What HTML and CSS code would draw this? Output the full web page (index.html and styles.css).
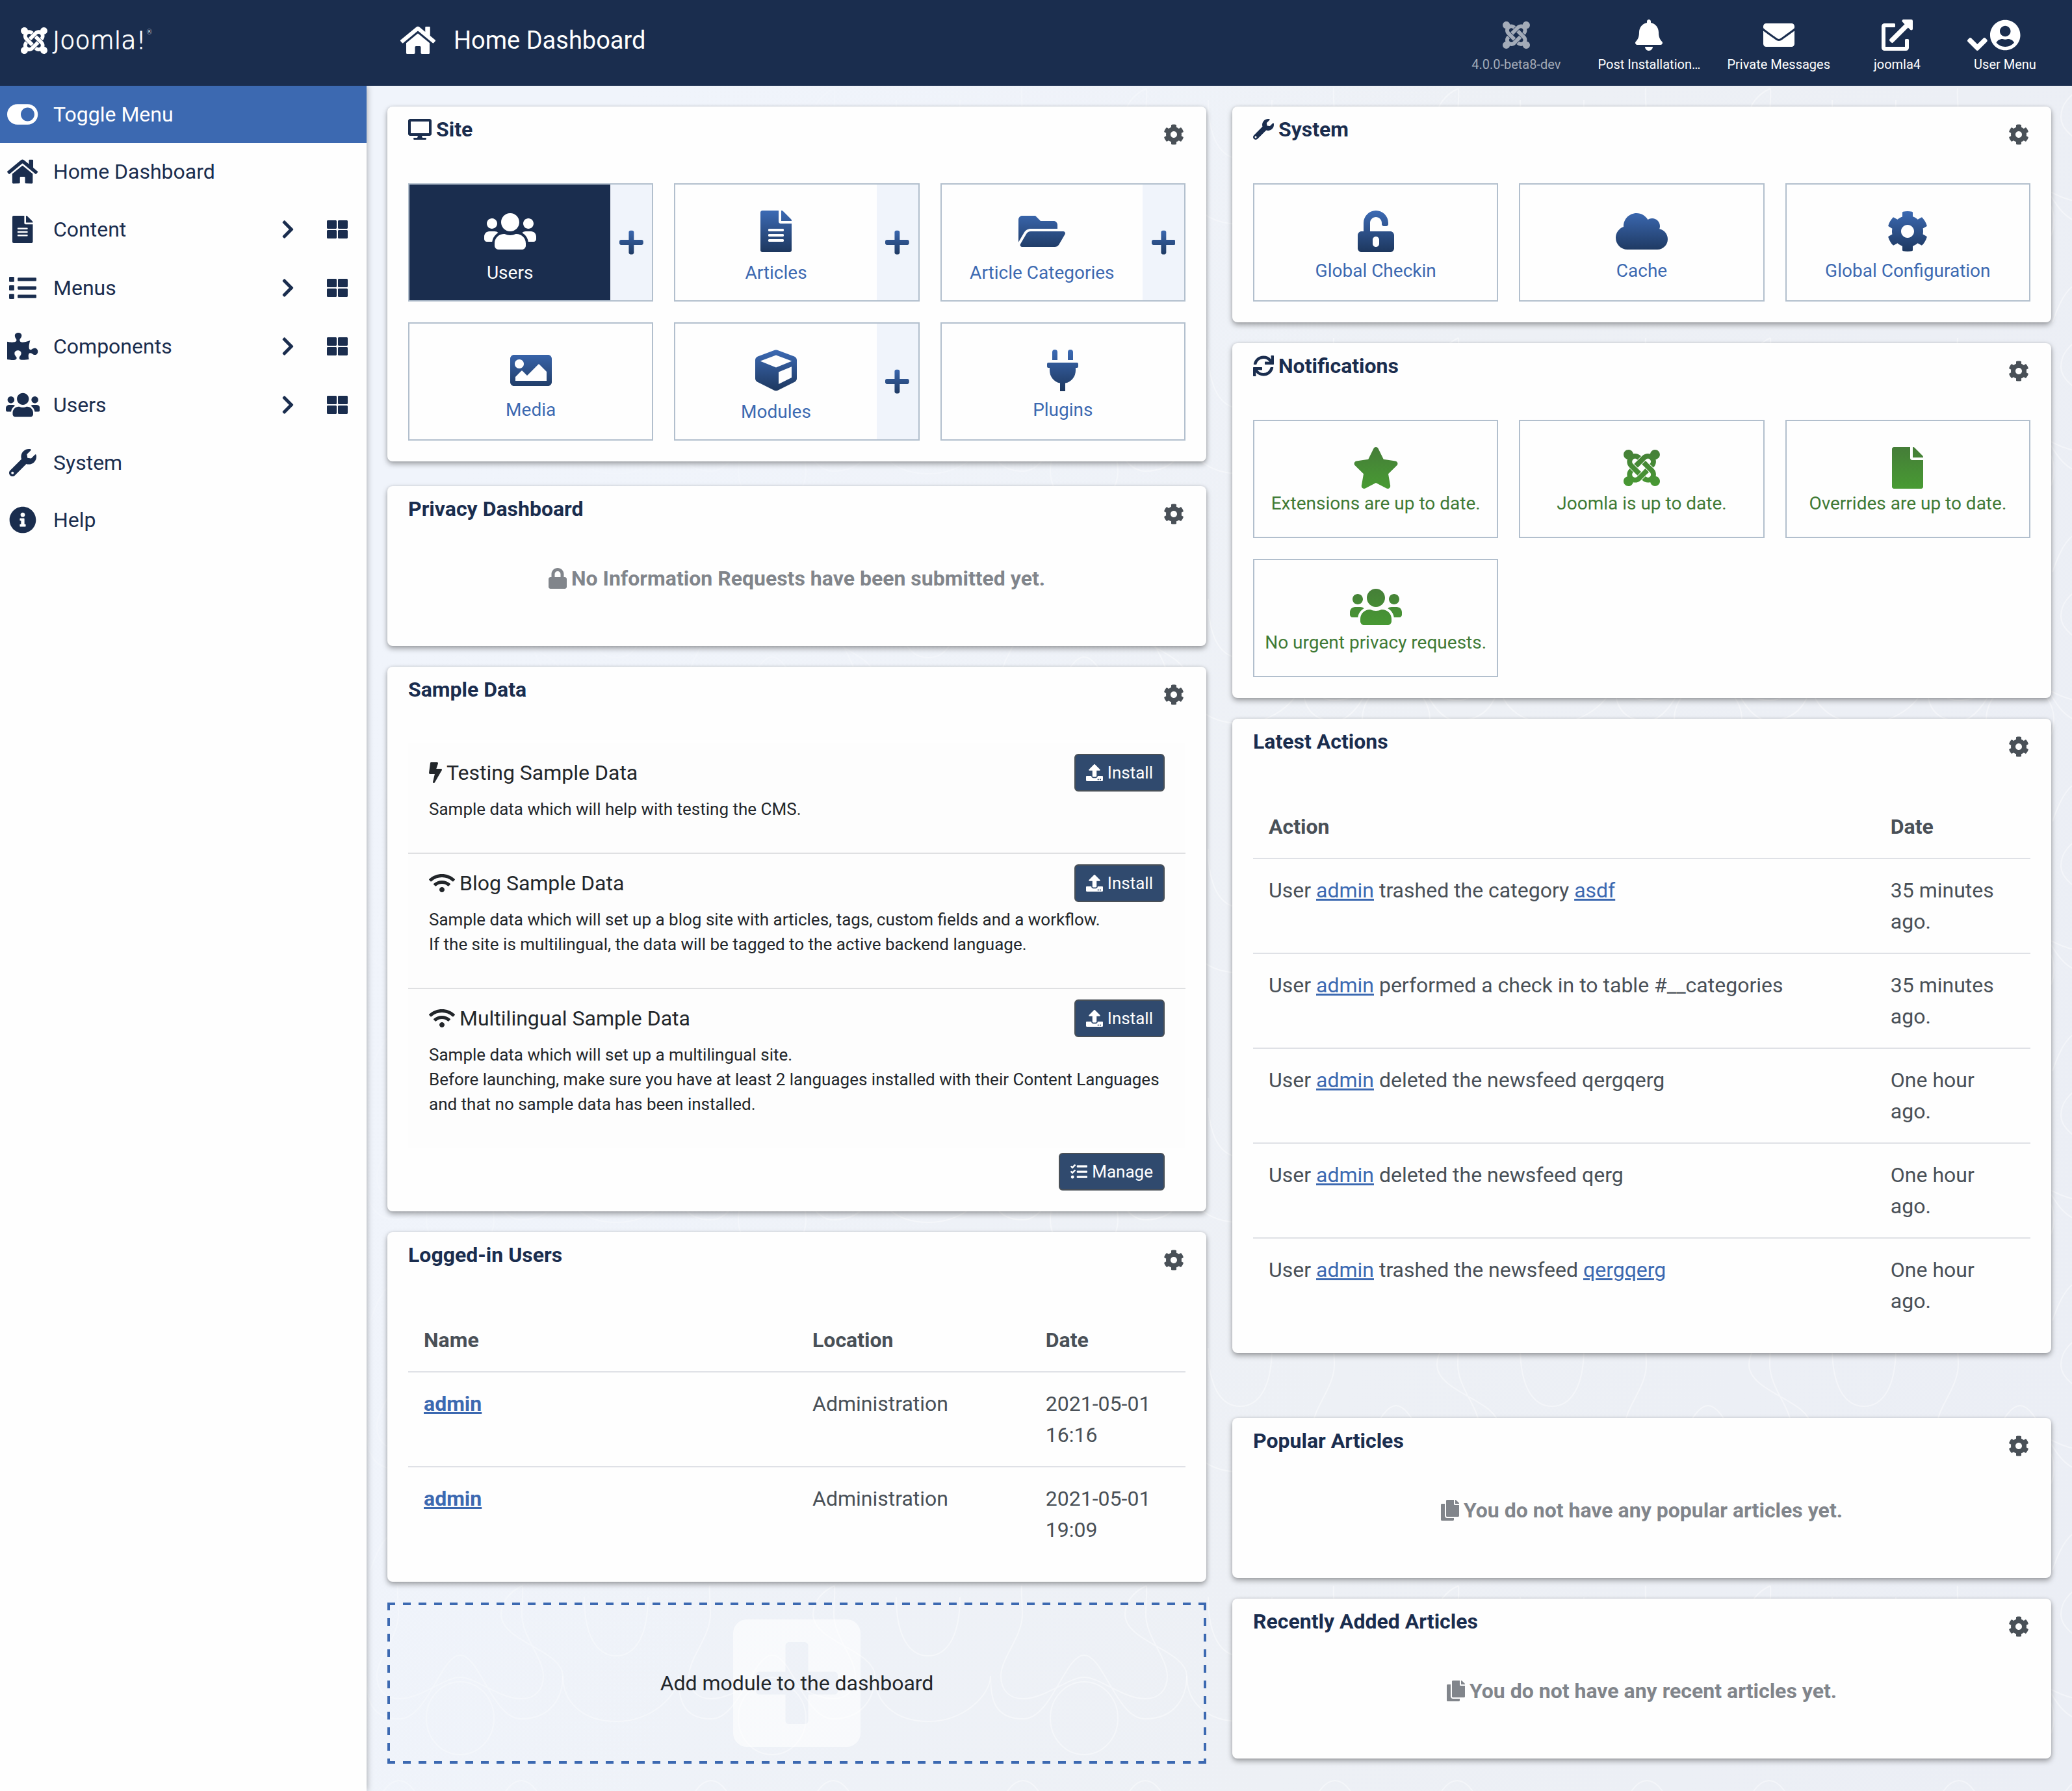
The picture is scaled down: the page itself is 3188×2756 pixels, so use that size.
FILE: index.html
```html
<!DOCTYPE html>
<html lang="en">
<head>
    <meta charset="UTF-8">
    <meta name="viewport" content="width=device-width, initial-scale=1.0">
    <title>Home Dashboard - joomla4 - Administration</title>
    <link rel="stylesheet" href="styles.css">
</head>
<body>
    <!-- Icon shapes -->
    <svg class="sprite" aria-hidden="true">
        <defs>
            <linearGradient id="blue" gradientUnits="userSpaceOnUse" x1="0" y1="0" x2="0" y2="512">
                <stop offset="0" stop-color="#3c6ab4"/>
                <stop offset="1" stop-color="#1d375e"/>
            </linearGradient>
            <linearGradient id="green" gradientUnits="userSpaceOnUse" x1="0" y1="0" x2="0" y2="512">
                <stop offset="0" stop-color="#457d38"/>
                <stop offset="1" stop-color="#489b33"/>
            </linearGradient>
            <path id="joomla" d="M.6 92.1C.6 58.8 27.4 32 60.4 32c30 0 54.5 21.9 59.2 50.2 32.6-7.6 67.1.6 96.5 30l-44.3 44.3c-20.5-20.5-42.6-16.3-55.4-3.5-14.3 14.3-14.3 37.9 0 52.2l99.5 99.5-44 44.3c-87.7-87.2-49.7-49.7-99.8-99.7-26.8-26.5-35-64.8-24.8-98.9C20.4 144.6.6 120.7.6 92.1zm129.5 116.4l44.3 44.3c10-10 89.7-89.7 99.7-99.8 14.3-14.3 37.6-14.3 51.9 0 12.8 12.8 17 35-3.5 55.4l44 44.3c31.2-31.2 38.5-67.6 28.9-101.2 29.2-4.1 51.9-29.2 51.9-59.5 0-33.2-26.8-60.1-59.8-60.1-30.3 0-55.4 22.5-59.5 51.6-33.8-9.9-71.7-1.5-98.3 25.1-18.3 19.1-71.1 71.5-99.6 99.9zm266.3 152.2c8.2-32.7-.9-68.5-26.3-93.9-11.8-12.2 5 4.7-99.5-99.7l-44.3 44.3 99.7 99.7c14.3 14.3 14.3 37.6 0 51.9-12.8 12.8-35 17-55.4-3.5l-44 44.3c27.6 30.2 68 38.8 102.7 28 5.5 27.4 29.7 48.1 58.9 48.1 33 0 59.8-26.8 59.8-60.1 0-30.2-22.5-55-51.6-59.1zm-84.3-53.1l-44-44.3c-87 86.4-50.4 50.4-99.7 99.8-14.3 14.3-37.6 14.3-51.9 0-13.1-13.4-16.9-35.3 3.2-55.4l-44-44.3c-30.2 30.2-38 65.2-29.5 98.3-26.7 6-46.2 29.9-46.2 58.2C0 453.2 26.8 480 59.8 480c28.6 0 52.5-19.8 58.6-46.7 32.7 8.2 68.5-.6 94.2-26 32.1-32 12.2-12.4 99.5-99.7z"/>
            <path id="home" d="M280.37 148.26L96 300.11V464a16 16 0 0 0 16 16l112.06-.29a16 16 0 0 0 15.92-16V368a16 16 0 0 1 16-16h64a16 16 0 0 1 16 16v95.64a16 16 0 0 0 16 16.05L464 480a16 16 0 0 0 16-16V300L295.67 148.26a12.19 12.19 0 0 0-15.3 0zM571.6 251.47L488 182.56V44.05a12 12 0 0 0-12-12h-56a12 12 0 0 0-12 12v72.61L318.47 43a48 48 0 0 0-61 0L4.34 251.47a12 12 0 0 0-1.6 16.9l25.5 31A12 12 0 0 0 45.15 301l235.22-193.74a12.19 12.19 0 0 1 15.3 0L530.9 301a12 12 0 0 0 16.9-1.6l25.5-31a12 12 0 0 0-1.7-16.93z"/>
            <path id="bell" d="M224 512c35.32 0 63.97-28.65 63.97-64H160.03c0 35.35 28.65 64 63.97 64zm215.39-149.71c-19.32-20.76-55.47-51.99-55.47-154.29 0-77.7-54.48-139.9-127.94-155.16V32c0-17.67-14.32-32-31.98-32s-31.98 14.33-31.98 32v20.84C118.56 68.1 64.08 130.3 64.08 208c0 102.3-36.15 133.53-55.47 154.29-6 6.45-8.66 14.16-8.61 21.71.11 16.4 12.98 32 32.1 32h383.8c19.12 0 32-15.6 32.1-32 .05-7.55-2.61-15.27-8.61-21.71z"/>
            <path id="envelope" d="M502.3 190.8c3.9-3.1 9.7-.2 9.7 4.7V400c0 26.5-21.5 48-48 48H48c-26.5 0-48-21.5-48-48V195.6c0-5 5.7-7.8 9.7-4.7 22.4 17.4 52.1 39.5 154.1 113.6 21.1 15.4 56.7 47.8 92.2 47.6 35.7.3 72-32.8 92.3-47.6 102-74.1 131.6-96.3 154-113.7zM256 320c23.2.4 56.6-29.2 73.4-41.4 132.7-96.3 142.8-104.7 173.4-128.7 5.8-4.5 9.2-11.5 9.2-18.9v-19c0-26.5-21.5-48-48-48H48c-26.5 0-48 21.5-48 48v19c0 7.4 3.4 14.3 9.2 18.9 30.6 23.9 40.7 32.4 173.4 128.7 16.8 12.2 50.2 41.8 73.4 41.4z"/>
            <path id="external" d="M432,320H400a16,16,0,0,0-16,16V448H64V128H208a16,16,0,0,0,16-16V80a16,16,0,0,0-16-16H48A48,48,0,0,0,0,112V464a48,48,0,0,0,48,48H400a48,48,0,0,0,48-48V336A16,16,0,0,0,432,320ZM488,0h-128c-21.37,0-32.05,25.91-17,41l35.73,35.73L135,320.37a24,24,0,0,0,0,34L157.67,377a24,24,0,0,0,34,0L435.28,133.32,471,169c15,15,41,4.5,41-17V24A24,24,0,0,0,488,0Z"/>
            <path id="user-circle" d="M248 8C111 8 0 119 0 256s111 248 248 248 248-111 248-248S385 8 248 8zm0 96c48.6 0 88 39.4 88 88s-39.4 88-88 88-88-39.4-88-88 39.4-88 88-88zm0 344c-58.7 0-111.3-26.6-146.5-68.2 18.8-35.4 55.6-59.8 98.5-59.8 2.4 0 4.8.4 7.1 1.1 13 4.2 26.6 6.9 40.9 6.9 14.3 0 28-2.7 40.9-6.9 2.3-.7 4.7-1.1 7.1-1.1 42.9 0 79.7 24.4 98.5 59.8C359.3 421.4 306.7 448 248 448z"/>
            <path id="angle-down" d="M143 352.3L7 216.3c-9.4-9.4-9.4-24.6 0-33.9l22.6-22.6c9.4-9.4 24.6-9.4 33.9 0l96.4 96.4 96.4-96.4c9.4-9.4 24.6-9.4 33.9 0l22.6 22.6c9.4 9.4 9.4 24.6 0 33.9l-136 136c-9.2 9.4-24.4 9.4-33.8 0z"/>
            <path id="toggle" d="M384 64H192C86 64 0 150 0 256s86 192 192 192h192c106 0 192-86 192-192S490 64 384 64zm0 320c-70.8 0-128-57.3-128-128 0-70.8 57.3-128 128-128 70.8 0 128 57.3 128 128 0 70.8-57.3 128-128 128z"/>
            <path id="file" d="M224 136V0H24C10.7 0 0 10.7 0 24v464c0 13.3 10.7 24 24 24h336c13.3 0 24-10.7 24-24V160H248c-13.2 0-24-10.8-24-24zm160-14.1v6.1H256V0h6.1c6.4 0 12.5 2.5 17 7l97.9 98c4.5 4.5 7 10.6 7 16.9z"/>
            <path id="file-alt" d="M224 136V0H24C10.7 0 0 10.7 0 24v464c0 13.3 10.7 24 24 24h336c13.3 0 24-10.7 24-24V160H248c-13.2 0-24-10.8-24-24zm64 236c0 6.6-5.4 12-12 12H108c-6.6 0-12-5.4-12-12v-8c0-6.6 5.4-12 12-12h168c6.6 0 12 5.4 12 12v8zm0-64c0 6.6-5.4 12-12 12H108c-6.6 0-12-5.4-12-12v-8c0-6.6 5.4-12 12-12h168c6.6 0 12 5.4 12 12v8zm0-72v8c0 6.6-5.4 12-12 12H108c-6.6 0-12-5.4-12-12v-8c0-6.6 5.4-12 12-12h168c6.6 0 12 5.4 12 12zm96-114.1v6.1H256V0h6.1c6.4 0 12.5 2.5 17 7l97.9 98c4.5 4.5 7 10.6 7 16.9z"/>
            <path id="list" d="M80 368H16a16 16 0 0 0-16 16v64a16 16 0 0 0 16 16h64a16 16 0 0 0 16-16v-64a16 16 0 0 0-16-16zm0-320H16A16 16 0 0 0 0 64v64a16 16 0 0 0 16 16h64a16 16 0 0 0 16-16V64a16 16 0 0 0-16-16zm0 160H16a16 16 0 0 0-16 16v64a16 16 0 0 0 16 16h64a16 16 0 0 0 16-16v-64a16 16 0 0 0-16-16zm416 176H176a16 16 0 0 0-16 16v32a16 16 0 0 0 16 16h320a16 16 0 0 0 16-16v-32a16 16 0 0 0-16-16zm0-320H176a16 16 0 0 0-16 16v32a16 16 0 0 0 16 16h320a16 16 0 0 0 16-16V80a16 16 0 0 0-16-16zm0 160H176a16 16 0 0 0-16 16v32a16 16 0 0 0 16 16h320a16 16 0 0 0 16-16v-32a16 16 0 0 0-16-16z"/>
            <path id="puzzle" d="M519.442 288.651c-41.519 0-59.5 31.593-82.058 31.593C377.409 320.244 432 144 432 144s-196.288 80-196.288-3.297c0-35.827 36.288-46.25 36.288-85.985C272 19.216 243.885 0 210.539 0c-34.654 0-66.366 18.891-66.366 56.346 0 41.364 31.711 59.277 31.711 81.75C175.885 207.719 0 166.758 0 166.758v333.237s178.635 41.047 178.635-28.662c0-22.473-40-40.107-40-81.471 0-37.456 29.25-56.346 63.577-56.346 33.673 0 61.788 19.216 61.788 54.717 0 39.735-36.288 50.158-36.288 85.985 0 60.803 129.675 25.73 181.23 25.73 0 0-34.725-120.101 25.827-120.101 35.962 0 46.423 36.152 86.308 36.152C556.712 416 576 387.99 576 354.443c0-34.199-18.962-65.792-56.558-65.792z"/>
            <path id="users" d="M96 224c35.3 0 64-28.7 64-64s-28.7-64-64-64-64 28.7-64 64 28.7 64 64 64zm448 0c35.3 0 64-28.7 64-64s-28.7-64-64-64-64 28.7-64 64 28.7 64 64 64zm32 32h-64c-17.6 0-33.5 7.1-45.1 18.6 40.3 22.1 68.9 62 75.1 109.4h66c17.7 0 32-14.3 32-32v-32c0-35.3-28.7-64-64-64zm-256 0c61.9 0 112-50.1 112-112S381.9 32 320 32 208 82.1 208 144s50.1 112 112 112zm76.8 32h-8.3c-20.8 10-43.9 16-68.5 16s-47.6-6-68.5-16h-8.3C179.6 288 128 339.6 128 403.2V432c0 26.5 21.5 48 48 48h288c26.5 0 48-21.5 48-48v-28.8c0-63.6-51.6-115.2-115.2-115.2zm-223.7-13.4C161.5 263.1 145.6 256 128 256H64c-35.3 0-64 28.7-64 64v32c0 17.7 14.3 32 32 32h65.9c6.3-47.4 34.9-87.3 75.2-109.4z"/>
            <path id="wrench" d="M507.73 109.1c-2.24-9.03-13.54-12.09-20.12-5.51l-74.36 74.36-67.88-11.31-11.31-67.88 74.36-74.36c6.62-6.62 3.43-17.9-5.66-20.16-47.38-11.74-99.55.91-136.58 37.93-39.64 39.64-50.55 97.1-34.05 147.2L18.74 402.76c-24.99 24.99-24.99 65.51 0 90.5 24.99 24.99 65.51 24.99 90.5 0l213.21-213.21c50.12 16.71 107.47 5.68 147.37-34.22 37.07-37.07 49.7-89.32 37.91-136.73zM64 472c-13.25 0-24-10.75-24-24 0-13.26 10.75-24 24-24s24 10.74 24 24c0 13.25-10.75 24-24 24z"/>
            <path id="info" d="M256 8C119.043 8 8 119.083 8 256c0 136.997 111.043 248 248 248s248-111.003 248-248C504 119.083 392.957 8 256 8zm0 110c23.196 0 42 18.804 42 42s-18.804 42-42 42-42-18.804-42-42 18.804-42 42-42zm56 254c0 6.627-5.373 12-12 12h-88c-6.627 0-12-5.373-12-12v-24c0-6.627 5.373-12 12-12h12v-64h-12c-6.627 0-12-5.373-12-12v-24c0-6.627 5.373-12 12-12h64c6.627 0 12 5.373 12 12v100h12c6.627 0 12 5.373 12 12v24z"/>
            <path id="chevron" d="M285.476 272.971L91.132 467.314c-9.373 9.373-24.569 9.373-33.941 0l-22.667-22.667c-9.357-9.357-9.375-24.522-.04-33.901L188.505 256 34.484 101.255c-9.335-9.379-9.317-24.544.04-33.901l22.667-22.667c9.373-9.373 24.569-9.373 33.941 0L285.475 239.03c9.373 9.372 9.373 24.568.001 33.941z"/>
            <path id="th-large" d="M296 32h192c13.255 0 24 10.745 24 24v160c0 13.255-10.745 24-24 24H296c-13.255 0-24-10.745-24-24V56c0-13.255 10.745-24 24-24zm-80 0H24C10.745 32 0 42.745 0 56v160c0 13.255 10.745 24 24 24h192c13.255 0 24-10.745 24-24V56c0-13.255-10.745-24-24-24zM0 296v160c0 13.255 10.745 24 24 24h192c13.255 0 24-10.745 24-24V296c0-13.255-10.745-24-24-24H24c-13.255 0-24 10.745-24 24zm296 184h192c13.255 0 24-10.745 24-24V296c0-13.255-10.745-24-24-24H296c-13.255 0-24 10.745-24 24v160c0 13.255 10.745 24 24 24z"/>
            <path id="cog" d="M487.4 315.7l-42.6-24.6c4.3-23.2 4.3-47 0-70.2l42.6-24.6c4.9-2.8 7.1-8.6 5.5-14-11.1-35.6-30-67.8-54.7-94.6-3.8-4.1-10-5.1-14.8-2.3L380.8 110c-17.9-15.4-38.5-27.3-60.8-35.1V25.8c0-5.6-3.9-10.5-9.4-11.7-36.7-8.2-74.3-7.8-109.2 0-5.5 1.2-9.4 6.1-9.4 11.7V75c-22.2 7.9-42.8 19.8-60.8 35.1L88.7 85.5c-4.9-2.8-11-1.9-14.8 2.3-24.7 26.7-43.6 58.9-54.7 94.6-1.7 5.4.6 11.2 5.5 14L67.3 221c-4.3 23.2-4.3 47 0 70.2l-42.6 24.6c-4.9 2.8-7.1 8.6-5.5 14 11.1 35.6 30 67.8 54.7 94.6 3.8 4.1 10 5.1 14.8 2.3l42.6-24.6c17.9 15.4 38.5 27.3 60.8 35.1v49.2c0 5.6 3.9 10.5 9.4 11.7 36.7 8.2 74.3 7.8 109.2 0 5.5-1.2 9.4-6.1 9.4-11.7v-49.2c22.2-7.9 42.8-19.8 60.8-35.1l42.6 24.6c4.9 2.8 11 1.9 14.8-2.3 24.7-26.7 43.6-58.9 54.7-94.6 1.5-5.5-.7-11.3-5.6-14.1zM256 336c-44.1 0-80-35.9-80-80s35.9-80 80-80 80 35.9 80 80-35.9 80-80 80z"/>
            <path id="desktop" d="M528 0H48C21.5 0 0 21.5 0 48v320c0 26.5 21.5 48 48 48h192l-16 48h-72c-13.3 0-24 10.7-24 24s10.7 24 24 24h272c13.3 0 24-10.7 24-24s-10.7-24-24-24h-72l-16-48h192c26.5 0 48-21.5 48-48V48c0-26.5-21.5-48-48-48zm-16 352H64V64h448v288z"/>
            <path id="plus" d="M416 208H272V64c0-17.67-14.33-32-32-32h-32c-17.67 0-32 14.33-32 32v144H32c-17.67 0-32 14.33-32 32v32c0 17.67 14.33 32 32 32h144v144c0 17.67 14.33 32 32 32h32c17.67 0 32-14.33 32-32V304h144c17.67 0 32-14.33 32-32v-32c0-17.67-14.33-32-32-32z"/>
            <path id="folder" d="M572.694 292.093L500.27 416.248A63.997 63.997 0 0 1 444.989 448H45.025c-18.523 0-30.064-20.093-20.731-36.093l72.424-124.155A64 64 0 0 1 152 256h399.964c18.523 0 30.064 20.093 20.73 36.093zM152 224h328v-48c0-26.51-21.49-48-48-48H272l-64-64H48C21.49 64 0 85.49 0 112v278.046l69.077-118.418C86.214 242.25 117.989 224 152 224z"/>
            <path id="image" d="M464 448H48c-26.51 0-48-21.49-48-48V112c0-26.51 21.49-48 48-48h416c26.51 0 48 21.49 48 48v288c0 26.51-21.49 48-48 48zM112 120c-30.928 0-56 25.072-56 56s25.072 56 56 56 56-25.072 56-56-25.072-56-56-56zM64 384h384V272l-87.515-87.515c-4.686-4.686-12.284-4.686-16.971 0L208 320l-55.515-55.515c-4.686-4.686-12.284-4.686-16.971 0L64 336v48z"/>
            <path id="cube" d="M239.1 6.3l-208 78c-18.7 7-31.1 25-31.1 45v225.1c0 18.2 10.3 34.8 26.5 42.9l208 104c13.5 6.8 29.4 6.8 42.9 0l208-104c16.3-8.1 26.5-24.8 26.5-42.9V129.3c0-20-12.4-37.9-31.1-44.9l-208-78C262 2.2 250 2.2 239.1 6.3zM256 68.4l192 72v1.1l-192 78-192-78v-1.1l192-72zm32 356V275.5l160-65v133.9l-160 80z"/>
            <path id="plug" d="M320,32a32,32,0,0,0-64,0v96h64Zm48,128H16A16,16,0,0,0,0,176v32a16,16,0,0,0,16,16H32v32A160.07,160.07,0,0,0,160,412.8V512h64V412.8A160.07,160.07,0,0,0,352,256V224h16a16,16,0,0,0,16-16V176A16,16,0,0,0,368,160ZM128,32a32,32,0,0,0-64,0v96h64Z"/>
            <path id="unlock" d="M400 256H152V152.9c0-39.6 31.7-72.5 71.3-72.9 40-.4 72.7 32.1 72.7 72v16c0 13.3 10.7 24 24 24h32c13.3 0 24-10.7 24-24v-16C376 68 307.5-.3 223.5 0 139.5.3 72 69.5 72 153.5V256H48c-26.5 0-48 21.5-48 48v160c0 26.5 21.5 48 48 48h352c26.5 0 48-21.5 48-48V304c0-26.5-21.5-48-48-48zM264 408c0 22.1-17.9 40-40 40s-40-17.9-40-40v-48c0-22.1 17.9-40 40-40s40 17.9 40 40v48z"/>
            <path id="cloud" d="M537.6 226.6c4.1-10.7 6.4-22.4 6.4-34.6 0-53-43-96-96-96-19.7 0-38.1 6-53.3 16.2C367 64.2 315.3 32 256 32c-88.4 0-160 71.6-160 160 0 2.7.1 5.4.2 8.1C40.2 219.8 0 273.2 0 336c0 79.5 64.5 144 144 144h368c70.7 0 128-57.3 128-128 0-61.9-44-113.6-102.4-125.4z"/>
            <path id="sync" d="M440.65 12.57l4 82.77A247.16 247.16 0 0 0 255.83 8C134.73 8 33.91 94.92 12.29 209.82A12 12 0 0 0 24.09 224h49.05a12 12 0 0 0 11.67-9.26 175.91 175.91 0 0 1 317-56.94l-101.46-4.86a12 12 0 0 0-12.57 12v47.41a12 12 0 0 0 12 12H500a12 12 0 0 0 12-12V12a12 12 0 0 0-12-12h-47.37a12 12 0 0 0-11.98 12.57zM255.83 432a175.61 175.61 0 0 1-146-77.8l101.8 4.87a12 12 0 0 0 12.57-12v-47.4a12 12 0 0 0-12-12H12a12 12 0 0 0-12 12V500a12 12 0 0 0 12 12h47.35a12 12 0 0 0 12-12.6l-4.15-82.57A247.17 247.17 0 0 0 255.83 504c121.11 0 221.93-86.92 243.55-201.82a12 12 0 0 0-11.8-14.18h-49.05a12 12 0 0 0-11.67 9.26A175.86 175.86 0 0 1 255.83 432z"/>
            <path id="star" d="M259.3 17.8L194 150.2 47.9 171.5c-26.2 3.8-36.7 36.1-17.7 54.6l105.7 103-25 145.5c-4.5 26.3 23.2 46 46.4 33.7L288 439.6l130.7 68.7c23.2 12.2 50.9-7.4 46.4-33.7l-25-145.5 105.7-103c19-18.5 8.5-50.8-17.7-54.6L382 150.2 316.7 17.8c-11.7-23.6-45.6-23.9-57.4 0z"/>
            <path id="lock" d="M400 224h-24v-72C376 68.2 307.8 0 224 0S72 68.2 72 152v72H48c-26.5 0-48 21.5-48 48v192c0 26.5 21.5 48 48 48h352c26.5 0 48-21.5 48-48V272c0-26.5-21.5-48-48-48zm-104 0H152v-72c0-39.7 32.3-72 72-72s72 32.3 72 72v72z"/>
            <path id="bolt" d="M296 160H180.6l42.6-129.8C227.2 15 215.7 0 200 0H56C44 0 33.8 8.9 32.2 20.8l-32 240C-1.7 275.2 9.5 288 24 288h118.7L96.6 482.5c-3.6 15.2 8 29.5 23.3 29.5 8.4 0 16.4-4.4 20.8-12l176-304c9.3-15.9-2.2-36-20.7-36z"/>
            <path id="wifi" d="M634.91 154.88C457.74-8.99 182.19-8.93 5.09 154.88c-6.66 6.16-6.79 16.59-.35 22.98l34.24 33.97c6.14 6.1 16.02 6.23 22.4.38 145.92-133.68 371.3-133.71 517.25 0 6.38 5.85 16.26 5.71 22.4-.38l34.24-33.97c6.43-6.39 6.3-16.82-.36-22.98zM320 352c-35.35 0-64 28.65-64 64s28.65 64 64 64 64-28.65 64-64-28.65-64-64-64zm202.67-83.59c-115.26-101.93-290.21-101.82-405.34 0-6.9 6.1-7.12 16.69-.57 23.15l34.44 33.99c6 5.92 15.66 6.32 22.05.8 83.95-72.57 209.74-72.41 293.49 0 6.39 5.52 16.05 5.13 22.05-.8l34.44-33.99c6.56-6.46 6.33-17.06-.56-23.15z"/>
            <path id="upload" d="M296 384h-80c-13.3 0-24-10.7-24-24V192h-87.7c-17.8 0-26.7-21.5-14.1-34.1L242.3 5.7c7.5-7.5 19.8-7.5 27.3 0l152.2 152.2c12.6 12.6 3.7 34.1-14.1 34.1H320v168c0 13.3-10.7 24-24 24zm216-8v112c0 13.3-10.7 24-24 24H24c-13.3 0-24-10.7-24-24V376c0-13.3 10.7-24 24-24h136v8c0 30.9 25.1 56 56 56h80c30.9 0 56-25.1 56-56v-8h136c13.3 0 24 10.7 24 24zm-124 88c0-11-9-20-20-20s-20 9-20 20 9 20 20 20 20-9 20-20zm64 0c0-11-9-20-20-20s-20 9-20 20 9 20 20 20 20-9 20-20z"/>
            <path id="tasks" d="M139.61 35.5a12 12 0 0 0-17 0L58.93 98.81l-22.7-22.12a12 12 0 0 0-17 0L3.53 92.41a12 12 0 0 0 0 17l47.59 47.4a12.78 12.78 0 0 0 17.61 0l15.59-15.62L156.52 69a12.09 12.09 0 0 0 .09-17zm0 159.19a12 12 0 0 0-17 0l-63.68 63.72-22.7-22.1a12 12 0 0 0-17 0L3.53 252a12 12 0 0 0 0 17L51 316.5a12.77 12.77 0 0 0 17.6 0l15.7-15.69 72.2-72.22a12 12 0 0 0 .09-16.9zM64 368c-26.49 0-48.59 21.5-48.59 48S37.53 464 64 464a48 48 0 0 0 0-96zm432 16H208a16 16 0 0 0-16 16v32a16 16 0 0 0 16 16h288a16 16 0 0 0 16-16v-32a16 16 0 0 0-16-16zm0-320H208a16 16 0 0 0-16 16v32a16 16 0 0 0 16 16h288a16 16 0 0 0 16-16V80a16 16 0 0 0-16-16zm0 160H208a16 16 0 0 0-16 16v32a16 16 0 0 0 16 16h288a16 16 0 0 0 16-16v-32a16 16 0 0 0-16-16z"/>
            <path id="copy" d="M320 448v40c0 13.255-10.745 24-24 24H24c-13.255 0-24-10.745-24-24V120c0-13.255 10.745-24 24-24h72v296c0 30.879 25.121 56 56 56h168zm0-344V0H152c-13.255 0-24 10.745-24 24v368c0 13.255 10.745 24 24 24h272c13.255 0 24-10.745 24-24V128H344c-13.2 0-24-10.8-24-24zm120.971-31.029L375.029 7.029A24 24 0 0 0 358.059 0H352v96h96v-6.059a24 24 0 0 0-7.029-16.97z"/>
            <path id="plus-square" fill-rule="evenodd" d="M48 0h352a48 48 0 0 1 48 48v352a48 48 0 0 1-48 48H48a48 48 0 0 1-48-48V48A48 48 0 0 1 48 0zM196 80a12 12 0 0 0-12 12v92H92a12 12 0 0 0-12 12v56a12 12 0 0 0 12 12h92v92a12 12 0 0 0 12 12h56a12 12 0 0 0 12-12v-92h92a12 12 0 0 0 12-12v-56a12 12 0 0 0-12-12h-92V92a12 12 0 0 0-12-12z"/>
        </defs>
    </svg>

    <!-- Header -->
    <header class="header">
        <a class="logo" href="#" aria-label="Joomla!">
            <svg class="icon" viewBox="0 32 448 448"><use href="#joomla"/></svg>
            <span class="logo-name">Joomla!<sup>®</sup></span>
        </a>
        <div class="page-title">
            <svg class="icon" viewBox="0 0 576 512"><use href="#home"/></svg>
            <h1>Home Dashboard</h1>
        </div>
        <div class="header-items">
            <div class="header-item version">
                <span class="header-icon"><svg class="icon" viewBox="0 0 448 512"><use href="#joomla"/></svg></span>
                <span>4.0.0-beta8-dev</span>
            </div>
            <a class="header-item messages" href="#">
                <span class="header-icon"><svg class="icon" viewBox="0 0 448 512"><use href="#bell"/></svg></span>
                <span>Post Installation…</span>
            </a>
            <a class="header-item" href="#">
                <span class="header-icon"><svg class="icon" viewBox="0 0 512 512"><use href="#envelope"/></svg></span>
                <span>Private Messages</span>
            </a>
            <a class="header-item" href="#">
                <span class="header-icon"><svg class="icon" viewBox="0 0 512 512"><use href="#external"/></svg></span>
                <span>joomla4</span>
            </a>
            <button class="header-item" type="button">
                <span class="header-icon user-icon">
                    <svg class="icon caret" viewBox="0 152 320 208"><use href="#angle-down"/></svg>
                    <svg class="icon" viewBox="0 0 496 512"><use href="#user-circle"/></svg>
                </span>
                <span>User Menu</span>
            </button>
        </div>
    </header>

    <div class="wrapper">
        <!-- Sidebar -->
        <nav class="sidebar">
            <button class="nav-item toggle" type="button">
                <span class="nav-icon"><svg class="icon" viewBox="0 0 576 512"><use href="#toggle"/></svg></span>
                <span class="nav-label">Toggle Menu</span>
            </button>
            <div class="nav-item">
                <span class="nav-icon"><svg class="icon" viewBox="0 0 576 512"><use href="#home"/></svg></span>
                <a class="nav-label" href="#">Home Dashboard</a>
            </div>
            <div class="nav-item parent">
                <span class="nav-icon"><svg class="icon" viewBox="0 0 384 512"><use href="#file-alt"/></svg></span>
                <a class="nav-label" href="#">Content</a>
                <svg class="icon nav-chevron" viewBox="0 0 320 512"><use href="#chevron"/></svg>
                <a class="nav-dashboard" href="#" aria-label="Content Dashboard"><svg class="icon" viewBox="0 0 512 512"><use href="#th-large"/></svg></a>
            </div>
            <div class="nav-item parent">
                <span class="nav-icon"><svg class="icon" viewBox="0 0 512 512"><use href="#list"/></svg></span>
                <a class="nav-label" href="#">Menus</a>
                <svg class="icon nav-chevron" viewBox="0 0 320 512"><use href="#chevron"/></svg>
                <a class="nav-dashboard" href="#" aria-label="Menus Dashboard"><svg class="icon" viewBox="0 0 512 512"><use href="#th-large"/></svg></a>
            </div>
            <div class="nav-item parent">
                <span class="nav-icon"><svg class="icon" viewBox="0 0 576 512"><use href="#puzzle"/></svg></span>
                <a class="nav-label" href="#">Components</a>
                <svg class="icon nav-chevron" viewBox="0 0 320 512"><use href="#chevron"/></svg>
                <a class="nav-dashboard" href="#" aria-label="Components Dashboard"><svg class="icon" viewBox="0 0 512 512"><use href="#th-large"/></svg></a>
            </div>
            <div class="nav-item parent">
                <span class="nav-icon"><svg class="icon" viewBox="0 0 640 512"><use href="#users"/></svg></span>
                <a class="nav-label" href="#">Users</a>
                <svg class="icon nav-chevron" viewBox="0 0 320 512"><use href="#chevron"/></svg>
                <a class="nav-dashboard" href="#" aria-label="Users Dashboard"><svg class="icon" viewBox="0 0 512 512"><use href="#th-large"/></svg></a>
            </div>
            <div class="nav-item">
                <span class="nav-icon"><svg class="icon" viewBox="0 0 512 512"><use href="#wrench"/></svg></span>
                <a class="nav-label" href="#">System</a>
            </div>
            <div class="nav-item">
                <span class="nav-icon"><svg class="icon" viewBox="0 0 512 512"><use href="#info"/></svg></span>
                <a class="nav-label" href="#">Help</a>
            </div>
        </nav>

        <main class="content">
            <!-- Left column -->
            <div class="column">
                <section class="card card-site">
                    <div class="card-header">
                        <h2><svg class="icon" viewBox="0 0 576 512"><use href="#desktop"/></svg>Site</h2>
                        <button class="gear" type="button" aria-label="Edit Site"><svg class="icon" viewBox="0 0 512 512"><use href="#cog"/></svg></button>
                    </div>
                    <div class="tiles">
                        <div class="tile has-add active">
                            <a class="tile-link" href="#"><svg class="icon" viewBox="0 0 640 512"><use href="#users"/></svg><span>Users</span></a>
                            <a class="tile-add" href="#" aria-label="Add user"><svg class="icon" viewBox="0 0 448 512" fill="url(#blue)"><use href="#plus"/></svg></a>
                        </div>
                        <div class="tile has-add">
                            <a class="tile-link" href="#"><svg class="icon" viewBox="0 0 384 512" fill="url(#blue)"><use href="#file-alt"/></svg><span>Articles</span></a>
                            <a class="tile-add" href="#" aria-label="Add article"><svg class="icon" viewBox="0 0 448 512" fill="url(#blue)"><use href="#plus"/></svg></a>
                        </div>
                        <div class="tile has-add">
                            <a class="tile-link" href="#"><svg class="icon" viewBox="0 0 576 512" fill="url(#blue)"><use href="#folder"/></svg><span>Article Categories</span></a>
                            <a class="tile-add" href="#" aria-label="Add category"><svg class="icon" viewBox="0 0 448 512" fill="url(#blue)"><use href="#plus"/></svg></a>
                        </div>
                        <div class="tile">
                            <a class="tile-link" href="#"><svg class="icon" viewBox="0 0 512 512" fill="url(#blue)"><use href="#image"/></svg><span>Media</span></a>
                        </div>
                        <div class="tile has-add">
                            <a class="tile-link" href="#"><svg class="icon" viewBox="0 0 512 512" fill="url(#blue)"><use href="#cube"/></svg><span>Modules</span></a>
                            <a class="tile-add" href="#" aria-label="Add module"><svg class="icon" viewBox="0 0 448 512" fill="url(#blue)"><use href="#plus"/></svg></a>
                        </div>
                        <div class="tile">
                            <a class="tile-link" href="#"><svg class="icon" viewBox="0 0 384 512" fill="url(#blue)"><use href="#plug"/></svg><span>Plugins</span></a>
                        </div>
                    </div>
                </section>

                <section class="card">
                    <div class="card-header">
                        <h2>Privacy Dashboard</h2>
                        <button class="gear" type="button" aria-label="Edit Privacy Dashboard"><svg class="icon" viewBox="0 0 512 512"><use href="#cog"/></svg></button>
                    </div>
                    <p class="empty"><svg class="icon" viewBox="0 0 448 512"><use href="#lock"/></svg>No Information Requests have been submitted yet.</p>
                </section>

                <section class="card">
                    <div class="card-header">
                        <h2>Sample Data</h2>
                        <button class="gear" type="button" aria-label="Edit Sample Data"><svg class="icon" viewBox="0 0 512 512"><use href="#cog"/></svg></button>
                    </div>
                    <ul class="sample-list">
                        <li>
                            <div class="sample-head">
                                <h3><svg class="icon" viewBox="0 0 320 512"><use href="#bolt"/></svg>Testing Sample Data</h3>
                                <button class="btn" type="button"><svg class="icon" viewBox="0 0 512 512"><use href="#upload"/></svg>Install</button>
                            </div>
                            <p>Sample data which will help with testing the CMS.</p>
                        </li>
                        <li>
                            <div class="sample-head">
                                <h3><svg class="icon" viewBox="0 0 640 512"><use href="#wifi"/></svg>Blog Sample Data</h3>
                                <button class="btn" type="button"><svg class="icon" viewBox="0 0 512 512"><use href="#upload"/></svg>Install</button>
                            </div>
                            <p>Sample data which will set up a blog site with articles, tags, custom fields and a workflow.<br>If the site is multilingual, the data will be tagged to the active backend language.</p>
                        </li>
                        <li>
                            <div class="sample-head">
                                <h3><svg class="icon" viewBox="0 0 640 512"><use href="#wifi"/></svg>Multilingual Sample Data</h3>
                                <button class="btn" type="button"><svg class="icon" viewBox="0 0 512 512"><use href="#upload"/></svg>Install</button>
                            </div>
                            <p>Sample data which will set up a multilingual site.<br>Before launching, make sure you have at least 2 languages installed with their Content Languages and that no sample data has been installed.</p>
                        </li>
                    </ul>
                    <div class="sample-footer">
                        <button class="btn" type="button"><svg class="icon" viewBox="0 0 512 512"><use href="#tasks"/></svg>Manage</button>
                    </div>
                </section>

                <section class="card">
                    <div class="card-header">
                        <h2>Logged-in Users</h2>
                        <button class="gear" type="button" aria-label="Edit Logged-in Users"><svg class="icon" viewBox="0 0 512 512"><use href="#cog"/></svg></button>
                    </div>
                    <table class="table users-table">
                        <thead>
                            <tr><th scope="col">Name</th><th scope="col">Location</th><th scope="col">Date</th></tr>
                        </thead>
                        <tbody>
                            <tr><th scope="row"><a href="#">admin</a></th><td>Administration</td><td>2021-05-01 16:16</td></tr>
                            <tr><th scope="row"><a href="#">admin</a></th><td>Administration</td><td>2021-05-01 19:09</td></tr>
                        </tbody>
                    </table>
                </section>

                <button class="add-module" type="button">
                    <svg class="add-mark" viewBox="0 0 448 448"><use href="#plus-square"/></svg>
                    <span>Add module to the dashboard</span>
                </button>
            </div>

            <!-- Right column -->
            <div class="column">
                <section class="card">
                    <div class="card-header">
                        <h2><svg class="icon" viewBox="0 0 512 512"><use href="#wrench"/></svg>System</h2>
                        <button class="gear" type="button" aria-label="Edit System"><svg class="icon" viewBox="0 0 512 512"><use href="#cog"/></svg></button>
                    </div>
                    <div class="tiles">
                        <div class="tile">
                            <a class="tile-link" href="#"><svg class="icon" viewBox="0 0 448 512" fill="url(#blue)"><use href="#unlock"/></svg><span>Global Checkin</span></a>
                        </div>
                        <div class="tile">
                            <a class="tile-link" href="#"><svg class="icon" viewBox="0 0 640 512" fill="url(#blue)"><use href="#cloud"/></svg><span>Cache</span></a>
                        </div>
                        <div class="tile">
                            <a class="tile-link" href="#"><svg class="icon" viewBox="0 0 512 512" fill="url(#blue)"><use href="#cog"/></svg><span>Global Configuration</span></a>
                        </div>
                    </div>
                </section>

                <section class="card">
                    <div class="card-header">
                        <h2><svg class="icon" viewBox="0 0 512 512"><use href="#sync"/></svg>Notifications</h2>
                        <button class="gear" type="button" aria-label="Edit Notifications"><svg class="icon" viewBox="0 0 512 512"><use href="#cog"/></svg></button>
                    </div>
                    <div class="tiles success">
                        <div class="tile">
                            <a class="tile-link" href="#"><svg class="icon" viewBox="0 0 576 512" fill="url(#green)"><use href="#star"/></svg><span>Extensions are up to date.</span></a>
                        </div>
                        <div class="tile">
                            <a class="tile-link" href="#"><svg class="icon" viewBox="0 0 448 512" fill="url(#green)"><use href="#joomla"/></svg><span>Joomla is up to date.</span></a>
                        </div>
                        <div class="tile">
                            <a class="tile-link" href="#"><svg class="icon" viewBox="0 0 384 512" fill="url(#green)"><use href="#file"/></svg><span>Overrides are up to date.</span></a>
                        </div>
                        <div class="tile">
                            <a class="tile-link" href="#"><svg class="icon" viewBox="0 0 640 512" fill="url(#green)"><use href="#users"/></svg><span>No urgent privacy requests.</span></a>
                        </div>
                    </div>
                </section>

                <section class="card card-actions">
                    <div class="card-header">
                        <h2>Latest Actions</h2>
                        <button class="gear" type="button" aria-label="Edit Latest Actions"><svg class="icon" viewBox="0 0 512 512"><use href="#cog"/></svg></button>
                    </div>
                    <table class="table actions-table">
                        <thead>
                            <tr><th scope="col">Action</th><th scope="col">Date</th></tr>
                        </thead>
                        <tbody>
                            <tr><td>User <a href="#">admin</a> trashed the category <a href="#">asdf</a></td><td>35 minutes ago.</td></tr>
                            <tr><td>User <a href="#">admin</a> performed a check in to table #__categories</td><td>35 minutes ago.</td></tr>
                            <tr><td>User <a href="#">admin</a> deleted the newsfeed qergqerg</td><td>One hour ago.</td></tr>
                            <tr><td>User <a href="#">admin</a> deleted the newsfeed qerg</td><td>One hour ago.</td></tr>
                            <tr><td>User <a href="#">admin</a> trashed the newsfeed <a href="#">qergqerg</a></td><td>One hour ago.</td></tr>
                        </tbody>
                    </table>
                </section>

                <section class="card">
                    <div class="card-header">
                        <h2>Popular Articles</h2>
                        <button class="gear" type="button" aria-label="Edit Popular Articles"><svg class="icon" viewBox="0 0 512 512"><use href="#cog"/></svg></button>
                    </div>
                    <p class="empty"><svg class="icon" viewBox="0 0 448 512"><use href="#copy"/></svg>You do not have any popular articles yet.</p>
                </section>

                <section class="card">
                    <div class="card-header">
                        <h2>Recently Added Articles</h2>
                        <button class="gear" type="button" aria-label="Edit Recently Added Articles"><svg class="icon" viewBox="0 0 512 512"><use href="#cog"/></svg></button>
                    </div>
                    <p class="empty"><svg class="icon" viewBox="0 0 448 512"><use href="#copy"/></svg>You do not have any recent articles yet.</p>
                </section>
            </div>
        </main>
    </div>
</body>
</html>
```

FILE: styles.css
```css
* {
    box-sizing: border-box;
}

body {
    font-family: Roboto, "Liberation Sans", sans-serif;
    font-size: 32px;
    line-height: 48px;
    color: #22262a;
    background-color: #eef1f7;
    margin: 0;
    min-height: 100vh;
    display: flex;
    flex-direction: column;
}

h1, h2, h3, p, ul {
    margin: 0;
    padding: 0;
}

a {
    color: #3c69b1;
}

button {
    font-family: inherit;
    color: inherit;
    background: none;
    border: none;
    padding: 0;
    cursor: pointer;
}

.sprite {
    position: absolute;
    width: 0;
    height: 0;
}

.icon {
    display: block;
    height: 1em;
    width: auto;
    flex-shrink: 0;
}

svg:not([fill]) {
    fill: currentColor;
}

/* Header */
.header {
    display: flex;
    align-items: flex-start;
    height: 132px;
    background-color: #1a2d4e;
    color: #fff;
}

.logo {
    display: flex;
    align-items: center;
    gap: 8px;
    width: 564px;
    flex-shrink: 0;
    height: 124px;
    padding-left: 32px;
    color: #fff;
    text-decoration: none;
}

.logo .icon {
    height: 41px;
}

.logo-name {
    display: flex;
    font-family: "DejaVu Sans", sans-serif;
    font-weight: 200;
    font-size: 38px;
    -webkit-text-stroke: 1px #fff;
}

.logo-name sup {
    font-size: 10px;
    line-height: 24px;
    -webkit-text-stroke: 0;
}

.page-title {
    display: flex;
    align-items: center;
    gap: 28px;
    flex-grow: 1;
    height: 124px;
    padding-left: 52px;
}

.page-title .icon {
    font-size: 48px;
}

.page-title h1 {
    font-size: 38px;
    font-weight: 400;
}

.header-items {
    display: flex;
    gap: 40px;
    padding: 30px 40px 0 0;
}

.header-item {
    display: flex;
    flex-direction: column;
    align-items: center;
    gap: 8px;
    min-width: 126px;
    font-size: 20px;
    line-height: 26px;
    white-space: nowrap;
    color: #fff;
    text-decoration: none;
}

.header-item.version {
    padding: 0 16px;
    color: #a3abb8;
}

.header-item.messages {
    width: 160px;
}

.header-icon {
    display: flex;
    font-size: 48px;
}

/* the caret hangs out to the left of the avatar, the label stays under it */
.user-icon {
    align-items: flex-end;
    gap: 4px;
    margin-right: 34px;
}

.header-icon .caret {
    height: 20px;
}

/* Sidebar */
.wrapper {
    display: flex;
    flex-grow: 1;
}

.sidebar {
    width: 564px;
    flex-shrink: 0;
    background-color: #fefefe;
    box-shadow: 0 0 10px rgba(0, 0, 0, 0.35);
    clip-path: inset(0 -12px 0 0);
}

.nav-item {
    display: flex;
    align-items: center;
    width: 100%;
    height: 88px;
    padding: 0 29px 0 8px;
    font-size: 32px;
    color: #1a2d4e;
    text-align: left;
}

.nav-item.parent {
    height: 90px;
}

.nav-item.toggle {
    background-color: #3c69b1;
    color: #fff;
}

.nav-icon {
    display: flex;
    justify-content: center;
    width: 54px;
    margin-right: 20px;
    font-size: 42px;
}

.nav-label {
    flex-grow: 1;
    color: inherit;
    text-decoration: none;
}

.nav-dashboard {
    margin-left: 50px;
    color: inherit;
}

/* Content */
.content {
    display: grid;
    grid-template-columns: 1fr 1fr;
    gap: 40px;
    flex-grow: 1;
    align-items: start;
    padding: 32px;
    background-color: #eef1f7;
    background-image:
        linear-gradient(115deg, #f0f4fb 10%, rgba(240, 244, 251, 0) 45%),
        url("data:image/svg+xml,%3Csvg xmlns='http://www.w3.org/2000/svg' width='480' height='384' fill='none' stroke='%23fff' stroke-opacity='.4' stroke-width='2'%3E%3Cg id='a'%3E%3Cpath d='M144 109c30 0 50 98 94 98 46 0 64-34 64-66 0-40-95-52-95-95 0-18 12-34 33-44M144 143c24 0 60 33 94 33 22 0 34-14 34-35 0-28-33-60-33-95 0-18 2-30 1-44M238 302c-20 0-34 30-44 60M238 302c20 0 34 30 44 60'/%3E%3Cellipse cx='144' cy='206' rx='52' ry='56'/%3E%3C/g%3E%3Cpath d='M144 109c-30 0-50 98-94 98-46 0-50-34-50-66M144 143c-24 0-60 33-94 33-22 0-34-14-34-35 0-28 33-60 33-95 0-18-2-30-1-44M302 141c0 40 30 70 83 70s95-40 95-70M335 20c0 60 20 90 49 90s49-30 49-90M50 302c-20 0-34 30-44 60M50 302c20 0 34 30 44 60'/%3E%3C/svg%3E"),
        linear-gradient(100deg, #f0f4fb, #edf0f5 60%, #ebeef5);
    background-position: 0 0, 0 2px, 0 0;
}

.column {
    display: flex;
    flex-direction: column;
    gap: 32px;
    min-width: 0;
}

.card {
    padding: 0 32px 32px;
    background-color: #fefefe;
    border-radius: 8px;
    box-shadow: 0 4px 8px rgba(0, 0, 0, 0.35), 0 0 4px rgba(0, 0, 0, 0.1);
}

.card-site {
    margin-bottom: 6px;
}

.card-actions {
    margin-bottom: 68px;
}

.card-header {
    display: flex;
    justify-content: space-between;
    align-items: flex-start;
    padding: 16px 0 48px;
}

.card-header h2 {
    display: flex;
    align-items: center;
    gap: 7px;
    font-size: 32px;
    line-height: 38px;
    font-weight: 700;
    color: #1a2d4e;
}

.gear {
    display: flex;
    align-items: center;
    height: 54px;
    padding-right: 2px;
    font-size: 32px;
    color: #495057;
}

/* Quick icons */
.tiles {
    display: grid;
    grid-template-columns: repeat(3, 1fr);
    gap: 32px;
}

.tile {
    display: flex;
    height: 182px;
    border: 2px solid #b2bfcd;
}

.tile-link {
    display: flex;
    flex-direction: column;
    align-items: center;
    gap: 8px;
    flex-grow: 1;
    padding-top: 40px;
    font-size: 28px;
    line-height: 42px;
    white-space: nowrap;
    text-decoration: none;
}

.tile-link .icon {
    font-size: 64px;
}

.has-add .tile-link {
    gap: 11px;
}

.success .tile-link {
    gap: 2px;
    color: #3f7a35;
}

.tile-add {
    display: flex;
    align-items: center;
    justify-content: center;
    width: 64px;
    flex-shrink: 0;
    font-size: 42px;
    background-color: #f0f4fb;
}

.tile.active .tile-link {
    background-color: #1a2d4e;
    color: #fff;
}

.empty {
    display: flex;
    align-items: center;
    justify-content: center;
    gap: 7px;
    margin-bottom: 48px;
    font-weight: 700;
    color: #81858b;
}

/* Sample data */
.sample-list {
    list-style: none;
    background-color: #fdfdfd;
}

.sample-list li {
    padding: 16px 32px 48px;
}

.sample-list li + li {
    border-top: 2px solid #dfe0e2;
}

.sample-head {
    display: flex;
    justify-content: space-between;
    align-items: center;
    margin-bottom: 8px;
}

.sample-head h3 {
    display: flex;
    align-items: center;
    gap: 7px;
    font-size: 32px;
    font-weight: 400;
}

.sample-list p {
    font-size: 26px;
    line-height: 38px;
}

.sample-footer {
    display: flex;
    justify-content: flex-end;
    padding: 8px 32px 0;
}

.btn {
    display: flex;
    align-items: center;
    gap: 7px;
    height: 58px;
    padding: 0 16px;
    font-size: 26px;
    color: #fff;
    background-color: #304a6e;
    border: 2px solid #495057;
    border-radius: 6px;
}

/* Tables */
.table {
    width: 100%;
    table-layout: fixed;
    border-collapse: separate;
    border-spacing: 0;
    color: #495057;
}

.table th,
.table td {
    padding: 24px;
    text-align: left;
    vertical-align: top;
}

.table tbody th,
.table tbody td {
    border-top: 2px solid #dfe1e6;
}

.users-table thead th:nth-child(1) {
    width: 50%;
}

.users-table thead th:nth-child(2) {
    width: 30%;
}

.actions-table thead th:nth-child(1) {
    width: 80%;
}

/* Add module, long dashes drawn on the four sides */
.add-module {
    display: grid;
    place-items: center;
    height: 248px;
    font-size: 32px;
    background:
        repeating-linear-gradient(90deg, #3c69b1 0 12px, transparent 12px 24px) top / 100% 4px no-repeat,
        repeating-linear-gradient(90deg, #3c69b1 0 12px, transparent 12px 24px) bottom / 100% 4px no-repeat,
        repeating-linear-gradient(#3c69b1 0 12px, transparent 12px 24px) left / 4px 100% no-repeat,
        repeating-linear-gradient(#3c69b1 0 12px, transparent 12px 24px) right / 4px 100% no-repeat;
}

.add-module > * {
    grid-area: 1 / 1;
}

.add-module span {
    z-index: 1;
}

.add-mark {
    width: 196px;
    height: 196px;
    color: rgba(255, 255, 255, 0.6);
}
```
